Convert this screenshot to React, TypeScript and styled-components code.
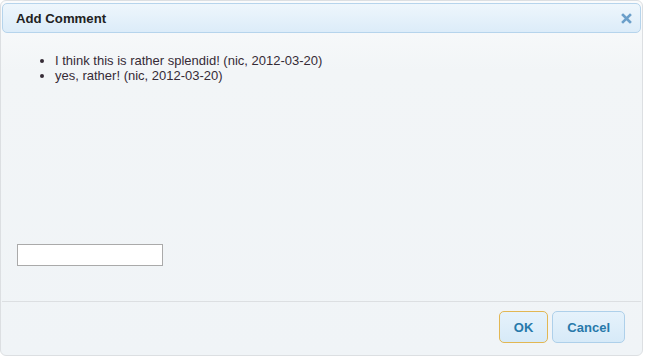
import React from "react";
import styled, { createGlobalStyle } from "styled-components";

const Global = createGlobalStyle`
  html, body { margin: 0; padding: 0; background: #ffffff; }
  body { font-family: "Liberation Sans", Arial, sans-serif; }
`;

const Dialog = styled.div`
  box-sizing: border-box;
  width: 643px;
  height: 356px;
  padding: 2px 1px 1px 1px;
  border: 1px solid #dcdfe2;
  border-radius: 6px;
  background: linear-gradient(#fafbfc 0px, #f2f5f7 70px, #f0f4f7 100%);
  display: flex;
  flex-direction: column;
  font-family: "Liberation Sans", Arial, sans-serif;
`;

const TitleBar = styled.div`
  box-sizing: border-box;
  height: 30px;
  border: 1px solid #b6d4ec;
  border-radius: 5px;
  background: linear-gradient(#eef6fc, #dcecf9);
  display: flex;
  align-items: center;
  justify-content: space-between;
  padding: 0 8px 0 13px;
`;

const Title = styled.span`
  font-size: 13.2px;
  font-weight: bold;
  color: #222222;
`;

const CloseButton = styled.button`
  width: 12px;
  height: 12px;
  padding: 0;
  border: none;
  background: transparent;
  display: flex;
  align-items: center;
  justify-content: center;
  cursor: pointer;
`;

const Content = styled.div`
  flex: 1;
  display: flex;
  flex-direction: column;
  padding: 20px 15px 0 15px;
  color: #362b36;
  font-size: 13px;
`;

const CommentList = styled.ul`
  margin: 0;
  padding-left: 38px;
  line-height: 15px;
  list-style: disc;
`;

const CommentInput = styled.input`
  box-sizing: border-box;
  width: 146px;
  height: 22px;
  margin: 161px 0 0 0;
  border: 1px solid #aaaaaa;
  background: #ffffff;
  font-family: "Liberation Sans", Arial, sans-serif;
  font-size: 12px;
  padding: 2px 4px;
  outline: none;
`;

const ButtonPane = styled.div`
  height: 53px;
  box-sizing: border-box;
  border-top: 1px solid #dcdfe2;
  display: flex;
  justify-content: flex-end;
  align-items: flex-start;
  gap: 4px;
  padding: 9px 16px 0 0;
`;

const Button = styled.button<{ $focused?: boolean }>`
  box-sizing: border-box;
  height: 32px;
  padding: 0 14px;
  border: 1px solid ${(p) => (p.$focused ? "#e2b753" : "#aed0ea")};
  border-radius: 5px;
  background: linear-gradient(#e6f2fb, #d7eaf8);
  color: #2779aa;
  font-family: "Liberation Sans", Arial, sans-serif;
  font-size: 13px;
  font-weight: bold;
  cursor: pointer;
`;

export default function App() {
  return (
    <>
      <Global />
      <Dialog>
        <TitleBar>
          <Title>Add Comment</Title>
          <CloseButton aria-label="close">
            <svg width="11" height="11" viewBox="0 0 11 11">
              <path
                d="M2 2 L9 9 M9 2 L2 9"
                stroke="#6b9fca"
                strokeWidth="2.6"
                strokeLinecap="square"
              />
            </svg>
          </CloseButton>
        </TitleBar>
        <Content>
          <CommentList>
            <li>I think this is rather splendid! (nic, 2012-03-20)</li>
            <li>yes, rather! (nic, 2012-03-20)</li>
          </CommentList>
          <CommentInput type="text" />
        </Content>
        <ButtonPane>
          <Button $focused>OK</Button>
          <Button>Cancel</Button>
        </ButtonPane>
      </Dialog>
    </>
  );
}
